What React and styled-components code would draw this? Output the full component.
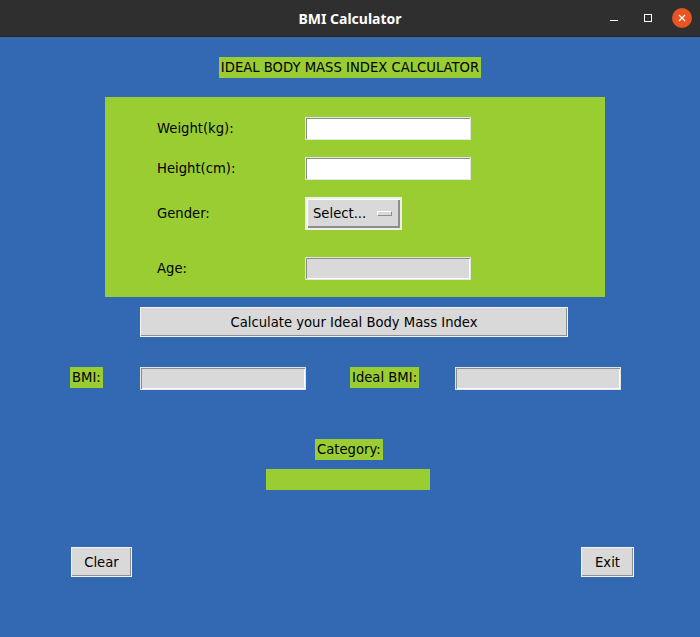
import React from "react";
import styled, { createGlobalStyle } from "styled-components";

const GlobalStyle = createGlobalStyle`
  body {
    margin: 0;
    background: #3369b3;
    font-family: "DejaVu Sans", sans-serif;
  }
`;

const green = "#9acd32";
const gray = "#d9d9d9";

const Window = styled.div`
  width: 700px;
  height: 637px;
  display: flex;
  flex-direction: column;
  background: #3369b3;
  overflow: hidden;
`;

const TitleBar = styled.div`
  height: 37px;
  flex-shrink: 0;
  background: #2f2f2f;
  display: grid;
  grid-template-columns: 1fr auto 1fr;
  align-items: center;
  box-sizing: border-box;
  border-bottom: 1px solid #262626;
`;

const Title = styled.div`
  grid-column: 2;
  color: #ffffff;
  font-family: "Noto Sans", "DejaVu Sans", sans-serif;
  font-weight: 700;
  font-size: 14px;
`;

const Controls = styled.div`
  justify-self: end;
  display: flex;
  gap: 14px;
  padding-right: 8px;
`;

const Control = styled.div`
  width: 20px;
  height: 20px;
  display: flex;
  align-items: center;
  justify-content: center;
  border-radius: 50%;
  background: ${(p) => (p.$close ? "#e95420" : "transparent")};
`;

const Body = styled.div`
  display: flex;
  flex-direction: column;
  padding-top: 20px;
  font-size: 13.2px;
  color: #000;
`;

const Tag = styled.div`
  align-self: ${(p) => (p.$center ? "center" : "flex-start")};
  justify-self: start;
  margin-left: ${(p) => p.$left || 0}px;
  margin-top: ${(p) => p.$top || 0}px;
  height: 21px;
  line-height: 21px;
  padding: 0 2px;
  background: ${green};
  white-space: nowrap;
`;

const Frame = styled.div`
  margin: 19px 0 0 105px;
  width: 500px;
  height: 200px;
  box-sizing: border-box;
  background: ${green};
  padding: 20px 0 0 52px;
`;

const Field = styled.div`
  display: flex;
  align-items: center;
  margin-top: ${(p) => p.$gap || 0}px;
`;

const FieldLabel = styled.div`
  width: 148px;
`;

const Entry = styled.input`
  width: 166px;
  height: 23px;
  box-sizing: border-box;
  margin: 0;
  padding: 0 3px;
  border: 1px solid #e4e4e4;
  box-shadow: inset 1px 1px 0 #8e8e8e, inset -1px -1px 0 #ffffff;
  background: ${(p) => (p.readOnly ? gray : "#ffffff")};
  font: inherit;
  outline: none;
`;

const MenuButton = styled.div`
  width: 97px;
  height: 33px;
  box-sizing: border-box;
  border: 2px solid #eeeeee;
  background: ${gray};
  box-shadow: inset 1px 1px 0 #ffffff, inset -2px -2px 0 #8e8e8e;
  display: flex;
  align-items: center;
  justify-content: space-between;
  padding: 0 8px 0 6px;
`;

const Indicator = styled.span`
  width: 15px;
  height: 5px;
  box-sizing: border-box;
  background: ${gray};
  border: 1px solid;
  border-color: #ffffff #8e8e8e #8e8e8e #ffffff;
`;

const Button = styled.button`
  width: ${(p) => p.$w}px;
  height: 30px;
  margin: 0;
  margin-left: ${(p) => p.$left || 0}px;
  margin-top: ${(p) => p.$top || 0}px;
  align-self: flex-start;
  box-sizing: border-box;
  padding: 0;
  border: 1px solid #f2f2f2;
  box-shadow: inset -1px -1px 0 #8e8e8e;
  background: ${gray};
  font: inherit;
  color: #000;
`;

const ResultRow = styled.div`
  display: grid;
  grid-template-columns: 70px 210px 105px 166px;
  align-items: start;
  padding-left: 70px;
  margin-top: 30px;
`;

const CategoryBar = styled.div`
  margin: 9px 0 0 266px;
  width: 164px;
  height: 21px;
  background: ${green};
`;

const Footer = styled.div`
  display: flex;
  justify-content: space-between;
  padding: 0 66px 0 71px;
  margin-top: 57px;
`;

export default function App() {
  return (
    <>
      <GlobalStyle />
      <Window>
        <TitleBar>
          <Title>BMI Calculator</Title>
          <Controls>
            <Control>
              <svg width="10" height="10" viewBox="0 0 10 10">
                <line x1="1" y1="7.5" x2="9" y2="7.5" stroke="#fff" strokeWidth="1" />
              </svg>
            </Control>
            <Control>
              <svg width="10" height="10" viewBox="0 0 10 10">
                <rect x="1.5" y="1.5" width="7" height="7" fill="none" stroke="#fff" strokeWidth="1" />
              </svg>
            </Control>
            <Control $close>
              <svg width="10" height="10" viewBox="0 0 10 10">
                <path d="M2 2 L8 8 M8 2 L2 8" stroke="#fff" strokeWidth="1.2" />
              </svg>
            </Control>
          </Controls>
        </TitleBar>
        <Body>
          <Tag $center>IDEAL BODY MASS INDEX CALCULATOR</Tag>
          <Frame>
            <Field>
              <FieldLabel>Weight(kg):</FieldLabel>
              <Entry />
            </Field>
            <Field $gap={17}>
              <FieldLabel>Height(cm):</FieldLabel>
              <Entry />
            </Field>
            <Field $gap={17}>
              <FieldLabel>Gender:</FieldLabel>
              <MenuButton>
                Select...
                <Indicator />
              </MenuButton>
            </Field>
            <Field $gap={27}>
              <FieldLabel>Age:</FieldLabel>
              <Entry readOnly />
            </Field>
          </Frame>
          <Button $w={428} $left={140} $top={10}>
            Calculate your Ideal Body Mass Index
          </Button>
          <ResultRow>
            <Tag>BMI:</Tag>
            <Entry readOnly />
            <Tag>Ideal BMI:</Tag>
            <Entry readOnly />
          </ResultRow>
          <Tag $left={315} $top={49}>Category:</Tag>
          <CategoryBar />
          <Footer>
            <Button $w={61}>Clear</Button>
            <Button $w={53}>Exit</Button>
          </Footer>
        </Body>
      </Window>
    </>
  );
}
